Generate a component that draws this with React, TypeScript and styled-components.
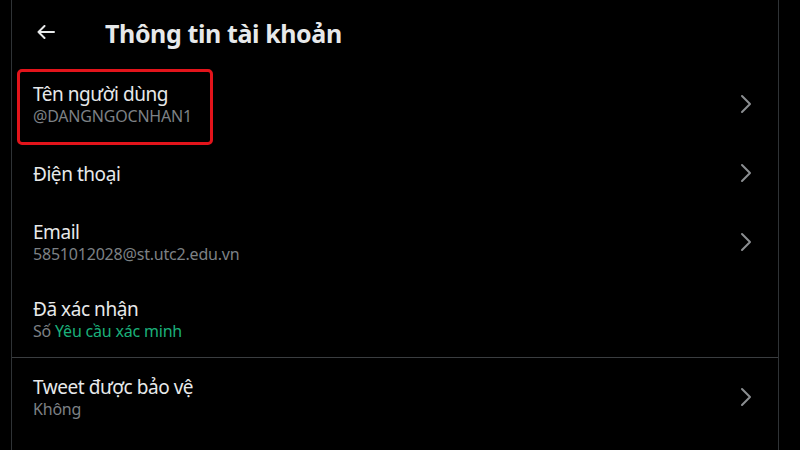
import React from "react";
import styled, { createGlobalStyle } from "styled-components";

const Global = createGlobalStyle`
  html, body { margin: 0; padding: 0; background: #000; }
  body { font-family: "Noto Sans", "Open Sans", sans-serif; color: #e7e9ea; }
  * { box-sizing: border-box; }
`;

const Page = styled.div`
  width: 800px;
  height: 450px;
  background: #000;
  overflow: hidden;
  padding-left: 11px;
`;

const Panel = styled.div`
  width: 768px;
  height: 450px;
  border-left: 1px solid #2f3336;
  border-right: 1px solid #2f3336;
  display: flex;
  flex-direction: column;
`;

const Header = styled.header`
  height: 65px;
  display: flex;
  align-items: center;
  padding-left: 25px;
`;

const BackButton = styled.button`
  width: 18px;
  height: 18px;
  padding: 0;
  border: 0;
  background: transparent;
  display: flex;
  align-items: center;
  justify-content: center;
  margin-right: 50px;
  margin-top: -2px;
  color: #e7e9ea;
`;

const Title = styled.h1`
  margin: 0;
  font-size: 25px;
  font-weight: 700;
  color: #e7e9ea;
  letter-spacing: -0.4px;
`;

const Row = styled.div<{ $divider?: boolean }>`
  position: relative;
  min-height: 61px;
  padding: 17px 26px 15px 21px;
  display: flex;
  align-items: center;
  border-top: ${(p) => (p.$divider ? "1px solid #3a3d40" : "none")};
`;

const Texts = styled.div`
  flex: 1;
  display: flex;
  flex-direction: column;
`;

const Label = styled.div`
  font-size: 19px;
  line-height: 24px;
  color: #e7e9ea;
  letter-spacing: -0.45px;
`;

const Sub = styled.div`
  font-size: 16px;
  line-height: 21px;
  color: #7d8185;
  letter-spacing: -0.2px;
`;

const Green = styled.span`
  color: #1bb07a;
`;

const Highlight = styled.div`
  position: absolute;
  left: 5px;
  top: 4px;
  width: 196px;
  height: 76px;
  border: 3px solid #e3141b;
  border-radius: 5px;
  pointer-events: none;
`;

const ChevronBox = styled.span`
  display: flex;
  margin-top: -2px;
`;

const Chevron = () => (
  <ChevronBox>
    <svg width="12" height="20" viewBox="0 0 12 20" fill="none">
      <polyline
        points="2,2 10,10 2,18"
        stroke="#8b8e91"
        strokeWidth="2"
        strokeLinecap="round"
        strokeLinejoin="round"
      />
    </svg>
  </ChevronBox>
);

const BackArrow = () => (
  <svg width="18" height="14" viewBox="0 0 18 14" fill="none">
    <path
      d="M17 7H1.5M7.5 1L1.5 7l6 6"
      stroke="#e7e9ea"
      strokeWidth="2"
      strokeLinecap="round"
      strokeLinejoin="round"
    />
  </svg>
);

type Item = {
  label: string;
  sub?: React.ReactNode;
  chevron: boolean;
  divider?: boolean;
  highlight?: boolean;
};

const items: Item[] = [
  { label: "Tên người dùng", sub: "@DANGNGOCNHAN1", chevron: true, highlight: true },
  { label: "Điện thoại", chevron: true },
  { label: "Email", sub: "5851012028@st.utc2.edu.vn", chevron: true },
  {
    label: "Đã xác nhận",
    sub: (
      <>
        Số <Green>Yêu cầu xác minh</Green>
      </>
    ),
    chevron: false,
  },
  { label: "Tweet được bảo vệ", sub: "Không", chevron: true, divider: true },
];

export default function App() {
  return (
    <>
      <Global />
      <Page>
        <Panel>
          <Header>
            <BackButton aria-label="Quay lại">
              <BackArrow />
            </BackButton>
            <Title>Thông tin tài khoản</Title>
          </Header>
          {items.map((it) => (
            <Row key={it.label} $divider={it.divider}>
              <Texts>
                <Label>{it.label}</Label>
                {it.sub && <Sub>{it.sub}</Sub>}
              </Texts>
              {it.chevron && <Chevron />}
              {it.highlight && <Highlight />}
            </Row>
          ))}
        </Panel>
      </Page>
    </>
  );
}
